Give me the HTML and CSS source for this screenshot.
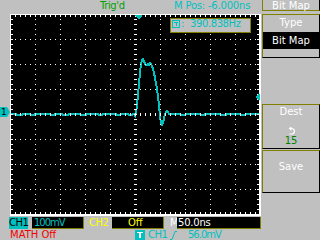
FILE: index.html
```html
<!DOCTYPE html>
<html>
<head>
<meta charset="utf-8">
<link rel="stylesheet" href="styles.css">
</head>
<body>
<div class="screen">
  <div class="main">
    <div class="topbar">
      <span class="trigd">Trig'd</span>
      <span class="mpos">M Pos: -6.000ns</span>
    </div>
    <div class="scope">
      <div class="ch1-marker">1</div>
      <div class="grat">
        <svg width="251" height="202" viewBox="0 0 251 202" shape-rendering="crispEdges">
          <defs>
            <pattern id="dv" width="25" height="5" patternUnits="userSpaceOnUse"><rect width="1" height="1" fill="#fff"/></pattern>
            <pattern id="dh" width="5" height="25" patternUnits="userSpaceOnUse"><rect width="1" height="1" fill="#fff"/></pattern>
            <pattern id="sx" width="5" height="202" patternUnits="userSpaceOnUse"><rect width="1" height="202" fill="#fff"/></pattern>
            <pattern id="sy" width="251" height="5" patternUnits="userSpaceOnUse"><rect width="251" height="1" fill="#fff"/></pattern>
          </defs>
          <rect width="251" height="202" fill="#000"/>
          <polyline fill="none" stroke="#00c0c0" stroke-width="2" points="0,100 6,100 7,101 12,101 13,100 20,100 21,101 24,101 25,100 40,100 41,101 44,101 45,100 52,100 53,101 58,101 59,100 70,100 71,101 76,101 77,100 88,100 89,101 92,101 93,100 106,100 107,101 110,101 111,100 118,100 119,101 122,101 123,100 124,100 125,102 126,99 127,91 128,82 129,69 130,59 131,50 132,46 133,45 134,47 135,50 136,51 137,51 138,50 139,51 140,49 141,50 142,52 143,55 144,59 145,64 146,69 147,75 148,82 149,91 150,102 151,109 152,111 153,109 154,104 155,100 156,98 157,97 158,98 159,100 170,100 171,101 175,101 176,100 190,100 191,101 194,101 195,100 210,100 211,101 216,101 217,100 230,100 231,101 235,101 236,100 250,100"/>
          <rect x="1" y="1" width="248" height="199" fill="url(#dv)"/>
          <rect x="1" y="1" width="248" height="199" fill="url(#dh)"/>
          <rect x="0" y="1" width="251" height="2" fill="url(#sx)"/>
          <rect x="0" y="198" width="251" height="2" fill="url(#sx)"/>
          <rect x="0" y="99" width="251" height="3" fill="url(#sx)"/>
          <rect x="1" y="0" width="2" height="202" fill="url(#sy)"/>
          <rect x="247" y="0" width="2" height="202" fill="url(#sy)"/>
          <rect x="124" y="0" width="3" height="202" fill="url(#sy)"/>
          <rect x="0" y="0" width="251" height="1" fill="#fff"/>
          <rect x="0" y="0" width="1" height="202" fill="#fff"/>
          <rect x="249" y="0" width="2" height="202" fill="#fff"/>
          <rect x="0" y="200" width="251" height="2" fill="#fff"/>
          <polygon points="125,1 132,1 132,2 129,5 128,5 125,2" fill="#00c0c0"/>
          <polygon points="245,83 248,80 250,80 250,86 248,86" fill="#00c0c0"/>
        </svg>
        <div class="readout">
          <svg class="tbox" width="8" height="8" viewBox="0 0 8 8" shape-rendering="crispEdges">
            <rect x="0.5" y="0.5" width="7" height="7" fill="none" stroke="#00c0c0"/>
            <rect x="2" y="2" width="4" height="1" fill="#00c0c0"/>
            <rect x="3.5" y="2" width="1" height="4" fill="#00c0c0"/>
          </svg>
          <span class="colon">:</span>
          <span>390.838Hz</span>
        </div>
      </div>
    </div>
    <div class="status">
      <div class="row1">
        <span class="lbl-ch1">CH1</span>
        <span class="val v-ch1">100mV</span>
        <span class="lbl-ch2">CH2</span>
        <span class="val v-ch2">Off</span>
        <span class="lbl-m">M</span>
        <span class="val v-time">50.0ns</span>
      </div>
      <div class="row2">
        <span class="math">MATH Off</span>
        <svg class="ticon" width="10" height="10" viewBox="0 0 10 10" shape-rendering="crispEdges">
          <rect width="10" height="10" fill="#00c0c0"/>
          <rect x="2" y="2" width="6" height="1" fill="#fff"/>
          <rect x="4" y="2" width="2" height="6" fill="#fff"/>
        </svg>
        <span class="tch">CH1</span>
        <svg class="slope" width="7" height="9" viewBox="0 0 7 9">
          <polyline points="0,8.5 2,8.5 5,0.5 7,0.5" fill="none" stroke="#00c0c0" stroke-width="1"/>
        </svg>
        <span class="tlvl">56.0mV</span>
      </div>
    </div>
  </div>
  <div class="menu">
    <div class="mbox hdr">Bit Map</div>
    <div class="mbox type">
      <div class="mtitle">Type</div>
      <div class="msel">Bit Map</div>
    </div>
    <div class="mbox dest">
      <div class="mtitle">Dest</div>
      <svg class="rot" width="9" height="8" viewBox="0 0 9 8">
        <path d="M3 1.5 H5 A3 2.8 0 0 1 5 7 H2.5" fill="none" stroke="#fff" stroke-width="1.2"/>
        <path d="M4.5 0 L2.5 1.5 L4.5 3" fill="none" stroke="#fff" stroke-width="1.1"/>
      </svg>
      <div class="mnum">15</div>
    </div>
    <div class="mbox save">
      <div class="mtitle">Save</div>
    </div>
  </div>
</div>
</body>
</html>
```

FILE: styles.css
```css
* {
  box-sizing: border-box;
  margin: 0;
  padding: 0;
}

body {
  margin: 0;
  background: #c0c0c0;
}

.screen {
  width: 320px;
  height: 240px;
  display: flex;
  background: #c0c0c0;
  font-family: "DejaVu Sans", "Noto Sans", sans-serif;
  font-size: 10px;
  line-height: 12px;
  color: #fff;
  overflow: hidden;
}

.main {
  width: 262px;
  display: flex;
  flex-direction: column;
}

.topbar {
  height: 14px;
  display: flex;
  padding-left: 100px;
}

.trigd {
  color: #00a000;
  width: 74px;
  letter-spacing: -0.4px;
}

.mpos {
  color: #00c0c0;
  letter-spacing: -0.2px;
}

.scope {
  height: 202px;
  display: flex;
  padding-left: 10px;
  position: relative;
}

.grat {
  width: 251px;
  height: 202px;
  position: relative;
}

.grat > svg {
  display: block;
}

.ch1-marker {
  position: absolute;
  left: 0;
  top: 93px;
  width: 10px;
  height: 10px;
  background: #00c0c0;
  clip-path: polygon(0 0, 7px 0, 10px 5px, 7px 10px, 0 10px);
  color: #000;
  font-size: 9px;
  line-height: 10px;
  padding-left: 1px;
}

.readout {
  position: absolute;
  left: 160px;
  top: 4px;
  width: 81px;
  height: 15px;
  border: 1px solid #808000;
  background: #c0c0c0;
  display: flex;
  align-items: flex-start;
  padding-left: 1px;
  color: #00c0c0;
  line-height: 10px;
  letter-spacing: -0.4px;
}

.tbox {
  display: block;
  margin-top: 1px;
}

.colon {
  margin-left: 1px;
  width: 9px;
}

.status {
  display: flex;
  flex-direction: column;
}

.row1 {
  height: 13px;
  display: flex;
  padding-top: 1px;
  line-height: 11px;
}

.lbl-ch1 {
  margin-left: 9px;
  width: 19px;
  height: 12px;
  background: #00c0c0;
  color: #000;
  text-align: center;
  letter-spacing: -0.5px;
}

.val {
  height: 12px;
  background: #000;
  border-right: 1px solid #808000;
  border-bottom: 1px solid #808000;
}

.v-ch1 {
  margin-left: 4px;
  width: 52px;
  padding-left: 2px;
  color: #00c0c0;
  letter-spacing: -1px;
}

.lbl-ch2 {
  margin-left: 5px;
  width: 18px;
  color: #ffff00;
  letter-spacing: -0.5px;
}

.v-ch2 {
  margin-left: 5px;
  width: 52px;
  padding-left: 16px;
  color: #ffff00;
}

.lbl-m {
  margin-left: 6px;
  width: 7px;
  color: #fff;
}

.v-time {
  width: 84px;
  padding-left: 1px;
  color: #fff;
  letter-spacing: -0.2px;
}

.row2 {
  height: 11px;
  display: flex;
  line-height: 11px;
}

.math {
  margin-left: 10px;
  width: 125px;
  color: #f00000;
}

.ticon {
  display: block;
  margin-top: 1px;
}

.tch {
  margin-left: 3px;
  width: 22px;
  color: #00c0c0;
  letter-spacing: -0.5px;
}

.slope {
  display: block;
  margin-top: 2px;
}

.tlvl {
  margin-left: 11px;
  color: #00c0c0;
  letter-spacing: -1px;
}

.menu {
  width: 58px;
  display: flex;
  flex-direction: column;
}

.mbox {
  width: 58px;
  border-left: 1px solid #808000;
  border-top: 1px solid #808000;
  border-right: 1px solid #000;
  border-bottom: 1px solid #000;
  text-align: center;
  display: flex;
  flex-direction: column;
  align-items: center;
}

.hdr {
  height: 11px;
  border-top: none;
  border-bottom: 1px solid #808000;
  padding-top: 1px;
  line-height: 10px;
}

.type {
  margin-top: 3px;
  height: 44px;
  padding-top: 2px;
}

.msel {
  align-self: stretch;
  margin-top: 3px;
  height: 17px;
  line-height: 17px;
  background: #000;
  color: #fff;
}

.dest {
  margin-top: 46px;
  height: 45px;
  padding-top: 1px;
}

.rot {
  display: block;
  margin-top: 9px;
}

.mnum {
  color: #008000;
}

.save {
  margin-top: 1px;
  height: 43px;
  padding-top: 10px;
}
```
